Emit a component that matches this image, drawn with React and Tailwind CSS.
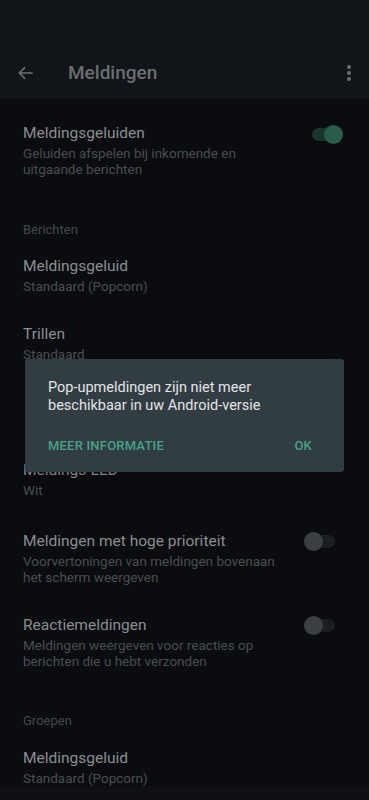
import React from 'react';

function Toggle({ on, className }) {
  if (on) {
    return (
      <div className={`relative w-[31px] h-[19px] ${className}`}>
        <div className="absolute left-0 right-0 top-[3px] h-[13px] rounded-full bg-[#1b352c]" />
        <div className="absolute right-0 top-0 w-[19px] h-[19px] rounded-full bg-[#2a5c4a]" />
      </div>
    );
  }
  return (
    <div className={`relative w-[31px] h-[19px] ${className}`}>
      <div className="absolute left-0 right-0 top-[3px] h-[13px] rounded-full bg-[#1b1e21]" />
      <div className="absolute left-0 top-0 w-[19px] h-[19px] rounded-full bg-[#3c3f42]" />
    </div>
  );
}

function Row({ title, sub, className = '', toggle }) {
  return (
    <div className={`flex items-start justify-between ${className}`}>
      <div className="flex flex-col">
        <div className="text-[15.5px] leading-[20px] text-[#8b8e90]">{title}</div>
        {sub && <div className="mt-[2px] text-[13.5px] leading-[16px] text-[#4a4e52] max-w-[260px]">{sub}</div>}
      </div>
      {toggle}
    </div>
  );
}

function Section({ label, className = '' }) {
  return <div className={`text-[13px] leading-[16px] text-[#44484c] ${className}`}>{label}</div>;
}

export default function App() {
  return (
    <div
      className="relative w-[369px] h-[800px] overflow-hidden bg-[#0a0c0f] flex flex-col"
      style={{ fontFamily: 'Roboto, "Noto Sans", sans-serif' }}
    >
      <div className="h-[99px] shrink-0 bg-[#111418] flex items-end pb-[12px]">
        <div className="flex items-center w-full h-[28px]">
          <svg className="ml-[16px]" width="20" height="20" viewBox="0 0 24 24" fill="none" stroke="#6b6e71" strokeWidth="2">
            <path d="M20 12H4M11 5l-7 7 7 7" />
          </svg>
          <div className="ml-[32px] text-[19px] font-medium text-[#6b6e71]">Meldingen</div>
          <svg className="ml-auto mr-[16px]" width="8" height="20" viewBox="0 0 8 20" fill="#6b6e71">
            <circle cx="4" cy="4" r="2" />
            <circle cx="4" cy="10" r="2" />
            <circle cx="4" cy="16" r="2" />
          </svg>
        </div>
      </div>

      <div className="flex-1 flex flex-col px-[23px]">
        <Row
          className="mt-[24px]"
          title="Meldingsgeluiden"
          sub="Geluiden afspelen bij inkomende en uitgaande berichten"
          toggle={<Toggle on className="mt-[2px] mr-[3px]" />}
        />
        <Section label="Berichten" className="mt-[45px]" />
        <Row className="mt-[18px]" title="Meldingsgeluid" sub="Standaard (Popcorn)" />
        <Row className="mt-[30px]" title="Trillen" sub="Standaard" />
        {/* row hidden behind the dialog */}
        <div className="mt-[30px] h-[38px]" />
        <Row className="mt-[30px]" title="Meldings-LED" sub="Wit" />
        <Row
          className="mt-[33px]"
          title="Meldingen met hoge prioriteit"
          sub="Voorvertoningen van meldingen bovenaan het scherm weergeven"
          toggle={<Toggle className="mt-[1px] mr-[11px]" />}
        />
        <Row
          className="mt-[30px]"
          title="Reactiemeldingen"
          sub="Meldingen weergeven voor reacties op berichten die u hebt verzonden"
          toggle={<Toggle className="mt-[1px] mr-[11px]" />}
        />
        <Section label="Groepen" className="mt-[44px]" />
        <Row className="mt-[19px]" title="Meldingsgeluid" sub="Standaard (Popcorn)" />
      </div>
      <div className="h-[15px] shrink-0 bg-[#0e1013]" />

      <div className="absolute left-[25px] top-[359px] w-[319px] h-[113px] rounded-[3px] bg-[#323c43] shadow-lg">
        <div className="pl-[23px] pr-[20px] pt-[20px] text-[14.5px] leading-[18px] text-[#e3e5e6]">
          Pop-upmeldingen zijn niet meer beschikbaar in uw Android-versie
        </div>
        <div className="flex justify-between pl-[23px] pr-[32px] mt-[21px] text-[13px] font-medium text-[#47a386] tracking-[0.2px]">
          <span>MEER INFORMATIE</span>
          <span>OK</span>
        </div>
      </div>
    </div>
  );
}
